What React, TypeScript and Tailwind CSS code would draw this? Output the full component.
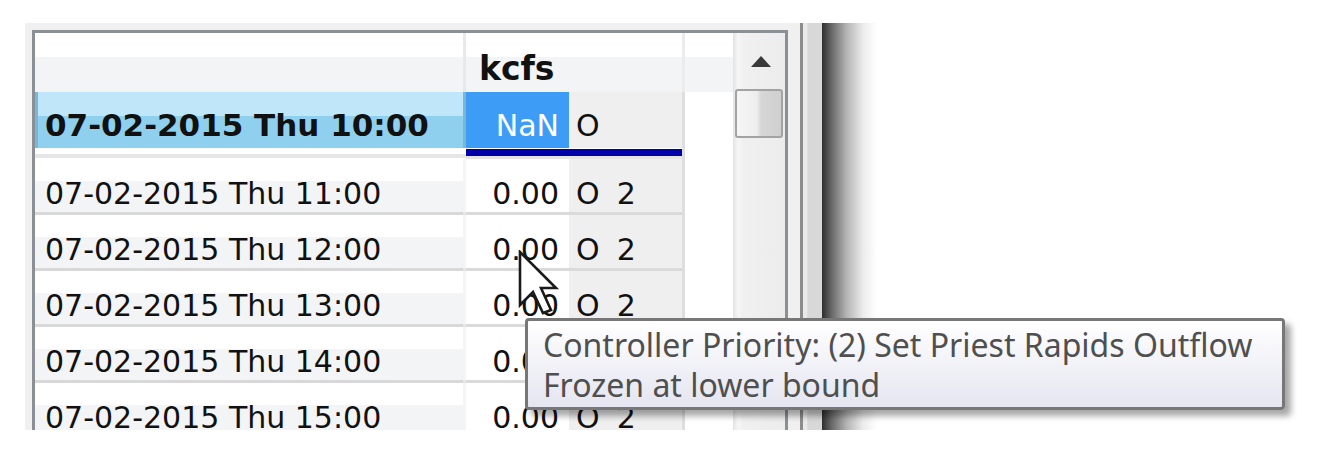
const rows = [
  "07-02-2015 Thu 11:00",
  "07-02-2015 Thu 12:00",
  "07-02-2015 Thu 13:00",
  "07-02-2015 Thu 14:00",
  "07-02-2015 Thu 15:00",
];

const gridFont = { fontFamily: '"DejaVu Sans", Verdana, sans-serif' };

function DataRow({ label }: { label: string }) {
  return (
    <div className="flex flex-col">
      <div className="flex h-[53px]">
        <div className="flex w-[428px] items-center bg-[linear-gradient(to_bottom,#ffffff_0%,#ffffff_42%,#f3f4f6_42%,#f3f4f6_100%)] pl-[10px] pt-[16px] text-[30px] text-[#111]">
          {label}
        </div>
        <div className="w-[3px] bg-[#f4f4f4]" />
        <div className="flex w-[103px] items-center justify-end bg-white pr-[10px] pt-[16px] text-[30px] text-[#111]">
          0.00
        </div>
        <div className="flex w-[113px] items-center gap-[17px] bg-[#efefef] pl-[7px] pt-[16px] text-[30px] text-[#111]">
          <span>O</span>
          <span>2</span>
        </div>
        <div className="w-[3px] bg-[#dedede]" />
        <div className="w-[48px] bg-white" />
      </div>
      <div className="flex h-[3px]">
        <div className="w-[428px] bg-[#d8d8d8]" />
        <div className="w-[3px] bg-[#e6e6e6]" />
        <div className="w-[216px] bg-[#dadada]" />
        <div className="w-[3px] bg-[#dedede]" />
        <div className="w-[48px] bg-white" />
      </div>
    </div>
  );
}

function Cursor() {
  return (
    <svg className="absolute left-[518px] top-[250px]" width="42" height="68" viewBox="0 0 42 68">
      <polygon
        points="2,2 2,55 15,42 25,63 33,60 23,38 38,38"
        fill="#ffffff"
        stroke="#1a1a1a"
        strokeWidth="2.6"
        strokeLinejoin="miter"
      />
    </svg>
  );
}

export default function App() {
  return (
    <div className="relative h-[454px] w-[1334px] overflow-hidden bg-white">
      <div className="ml-[25px] mt-[23px] flex h-[407px]">
        {/* panel around the grid */}
        <div className="flex bg-[#f0f0f0] pl-[7px] pr-[12px] pt-[7px]">
          <div
            className="flex h-[400px] w-[756px] overflow-hidden border-l-[3px] border-r-[3px] border-t-[3px] border-[#8b8f97] bg-white"
            style={gridFont}
          >
            {/* table */}
            <div className="flex w-[698px] flex-col">
              {/* header */}
              <div className="flex h-[59px] bg-[linear-gradient(to_bottom,#ffffff_0%,#ffffff_40%,#f3f4f6_40%,#f3f4f6_100%)]">
                <div className="w-[428px]" />
                <div className="w-[3px] bg-[#e9e9e9]" />
                <div className="flex w-[216px] items-center pl-[13px] pt-[12px] text-[33px] font-bold text-[#111]">
                  kcfs
                </div>
                <div className="w-[3px] bg-[#ececec]" />
                <div className="w-[48px]" />
              </div>
              <div className="h-[4px] bg-[#d6d6d6]" />

              {/* selected row */}
              <div className="flex h-[56px]">
                <div className="flex w-[431px] items-center border-l-[3px] border-r-[3px] border-[#7ab7d6] bg-[linear-gradient(to_bottom,#bfe6f9_0%,#bfe6f9_42%,#8fd0ef_42%,#8fd0ef_100%)] pl-[7px] pt-[11px] text-[31px] font-bold text-[#111]">
                  07-02-2015 Thu 10:00
                </div>
                <div className="flex w-[103px] items-center justify-end bg-[#3d9df6] pr-[10px] pt-[11px] text-[30px] text-white">
                  NaN
                </div>
                <div className="flex w-[113px] items-center bg-[#efefef] pl-[7px] pt-[11px] text-[30px] text-[#111]">
                  O
                </div>
                <div className="w-[3px] bg-[#dedede]" />
                <div className="w-[48px] bg-white" />
              </div>
              <div className="flex h-[11px]">
                <div className="flex w-[431px] flex-col">
                  <div className="h-[6px] bg-white" />
                  <div className="h-[4px] bg-[#e6e6e6]" />
                </div>
                <div className="flex w-[216px] flex-col">
                  <div className="h-[1px] bg-white" />
                  <div className="h-[7px] bg-[#0000a8]" />
                  <div className="h-[3px] bg-[#e4e4e4]" />
                </div>
                <div className="w-[3px] bg-[#dedede]" />
                <div className="w-[48px] bg-white" />
              </div>

              {rows.map((r) => (
                <DataRow key={r} label={r} />
              ))}
            </div>

            {/* vertical scrollbar */}
            <div className="flex w-[52px] flex-col bg-[linear-gradient(to_right,#e3e3e3_0px,#f6f6f6_5px,#f0f0f0_10px,#ececec_100%)]">
              <div className="flex h-[56px] items-center justify-center pl-[4px]">
                <svg width="22" height="13" viewBox="0 0 22 13">
                  <polygon points="11,1 21,12 1,12" fill="#3a3a3a" />
                </svg>
              </div>
              <div className="mx-[2px] h-[49px] rounded-[3px] border-2 border-[#a3a3a3] bg-[linear-gradient(to_right,#f5f5f5_0%,#eeeeee_45%,#d6d6d6_55%,#cfcfcf_100%)]" />
            </div>
          </div>
        </div>
        <div className="w-[3px] bg-[#8c8c8c]" />
        <div className="w-[19px] bg-[linear-gradient(to_right,#e9e9e9_0%,#e9e9e9_20%,#d8d8d8_25%,#d8d8d8_100%)]" />
        <div className="w-[55px] bg-[linear-gradient(to_right,#2e2e2e_0%,#6a6a6a_18%,#b5b5b5_45%,#ececec_75%,#ffffff_100%)]" />
      </div>

      <Cursor />

      {/* tooltip */}
      <div
        className="absolute left-[525px] top-[318px] h-[92px] w-[760px] rounded-[4px] border-[3px] border-[#777777] bg-[linear-gradient(to_bottom,#ffffff,#e4e5f0)] pl-[15px] pt-[4px] text-[32px] leading-[40px] text-[#4f4f4f] shadow-[6px_6px_6px_rgba(0,0,0,0.35)]"
        style={{ fontFamily: '"Noto Sans", "Open Sans", sans-serif' }}
      >
        <div>Controller Priority: (2) Set Priest Rapids Outflow</div>
        <div>Frozen at lower bound</div>
      </div>
    </div>
  );
}
